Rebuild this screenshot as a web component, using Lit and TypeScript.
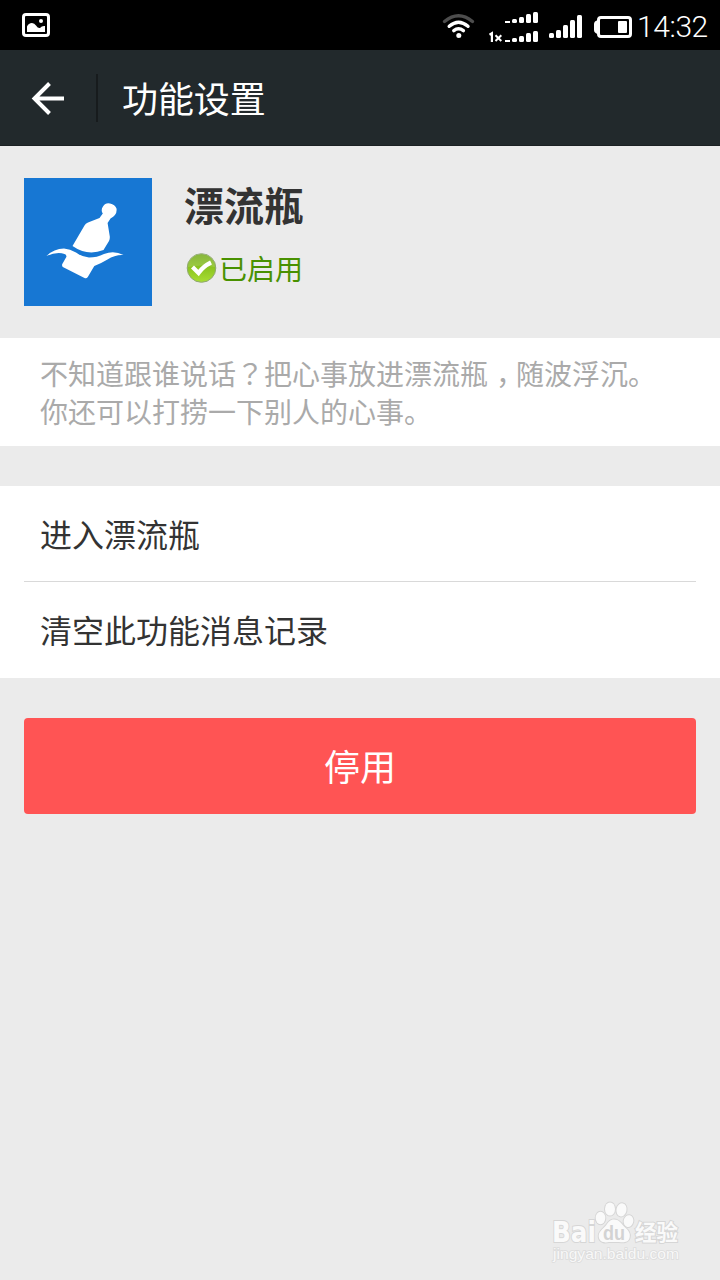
import { LitElement, html, css, svg } from "lit";
import { customElement, property } from "lit/decorators.js";

@customElement("status-bar")
class StatusBar extends LitElement {
  static styles = css`
    :host { display: flex; height: 50px; background: #000; justify-content: space-between; color: #fff; }
    svg { display: block; }
    .right { display: flex; }
    .time { font: 300 30px/50px Roboto, sans-serif; width: 83px; padding-top: 2px; height: 48px; white-space: nowrap; letter-spacing: -0.4px; }
  `;
  bars(x: number, base: number, heights: number[], step: number, w: number) {
    return heights.map((h, i) => svg`<rect x=${x + i * step} y=${base - h} width=${w} height=${h} rx=${h > 3 ? 1.5 : 0.5}></rect>`);
  }
  render() {
    return html`
      <svg width="60" height="50" fill="#fff">
        <rect x="23.5" y="14.5" width="25" height="21" rx="2.5" fill="none" stroke="#fff" stroke-width="3"></rect>
        <circle cx="41" cy="21" r="2"></circle>
        <path d="M27 32V26.5Q28.5 23 32 23Q34.5 23 36 25.5Q38 28.5 40 28Q42 25.5 45 26V32Z"></path>
      </svg>
      <div class="right">
        <svg width="207" height="50" viewBox="430 0 207 50" fill="#fff">
          <g fill="none" stroke="#fff" stroke-width="3.4" stroke-linecap="round">
            <path d="M444.5 21.5Q458.5 9.8 472.5 21.5" stroke="#4d4d4d"></path>
            <path d="M449.2 26.3Q458.5 18.2 468 26.3"></path>
            <path d="M453.8 30.6Q458.5 26.8 463.4 30.6"></path>
          </g>
          <circle cx="458.8" cy="35.6" r="2.5"></circle>
          <path d="M489.5 34.8L491.9 33.3V42" fill="none" stroke="#fff" stroke-width="2.2"></path>
          <path d="M495.5 35.2L501.3 41M501.3 35.2L495.5 41" stroke="#fff" stroke-width="2"></path>
          ${this.bars(512, 23, [4, 6, 9, 11], 7, 5)}
          <rect x="505" y="21" width="5" height="2"></rect>
          ${this.bars(512, 42, [4, 6, 9, 11], 7, 5)}
          <rect x="505" y="40" width="5" height="2"></rect>
          ${this.bars(549, 38, [5, 8, 13, 18, 23], 7, 5)}
          <rect x="598.5" y="17.5" width="32" height="19" rx="2.5" fill="none" stroke="#fff" stroke-width="3"></rect>
          <path d="M598 20Q594 21 594 24V30Q594 33 598 34Z"></path>
          <rect x="618" y="21" width="9" height="12" rx="1"></rect>
        </svg>
        <div class="time">14:32</div>
      </div>`;
  }
}

@customElement("title-bar")
class TitleBar extends LitElement {
  @property() heading = "";
  static styles = css`
    :host { display: flex; align-items: flex-start; box-sizing: border-box; height: 96px; background: #22292c; border-bottom: 1px solid #1b2023; color: #fff; }
    svg { width: 96px; height: 96px; }
    .rule { width: 2px; height: 48px; margin-top: 24px; background: #171b1d; }
    .text { margin-left: 24px; font-size: 36px; line-height: 94px; letter-spacing: -0.1px; }
  `;
  render() {
    return html`
      <svg viewBox="0 0 96 96"><path d="M64 48.5H34M49.5 33.5L34.5 48.5L49.5 63.5" fill="none" stroke="#fff" stroke-width="4"></path></svg>
      <div class="rule"></div>
      <div class="text">${this.heading}</div>`;
  }
}

@customElement("site-watermark")
class SiteWatermark extends LitElement {
  static styles = css`
    :host { position: absolute; left: 540px; top: 1190px; }
    svg { display: block; }
    .mark { fill: #fafafa; stroke: #d6d6d6; stroke-width: 2px; paint-order: stroke; }
    .name { font: bold 29px "DejaVu Sans", sans-serif; }
    .cn { font: bold 22px "Liberation Sans", "Noto Sans CJK SC", sans-serif; }
    .du { font: bold 20px "Liberation Sans", sans-serif; fill: #d3d3d3; }
    .url { font: 15px "Liberation Sans", sans-serif; stroke-width: 1.6px; stroke: #dcdcdc; fill: #f8f8f8; }
  `;
  render() {
    return html`<svg width="160" height="85">
      <g class="mark">
        <text class="name" x="12" y="52" textLength="44" lengthAdjust="spacingAndGlyphs">Bai</text>
        <ellipse cx="60.5" cy="28" rx="4.8" ry="6.2"></ellipse>
        <ellipse cx="70" cy="19" rx="5" ry="6.6"></ellipse>
        <ellipse cx="81.5" cy="20" rx="5" ry="6.6" transform="rotate(12 82 20)"></ellipse>
        <ellipse cx="88.5" cy="31" rx="4.8" ry="6" transform="rotate(12 88 31)"></ellipse>
        <path d="M74 29.5C79 29.5 81 33 84 36.5C88 40 91 43 89.5 48C88 53 83 52.5 79 52H69C65 53 59.5 52.5 58.8 47C58 42 63 39 66 35.5C68.5 32 70 29.5 74 29.5Z"></path>
        <text class="cn" x="95" y="50" textLength="43" lengthAdjust="spacingAndGlyphs">经验</text>
        <text class="url" x="13" y="69" textLength="126" lengthAdjust="spacingAndGlyphs">jingyan.baidu.com</text>
      </g>
      <text class="du" x="63" y="50" textLength="22" lengthAdjust="spacingAndGlyphs">du</text>
    </svg>`;
  }
}

@customElement("app-root")
class AppRoot extends LitElement {
  static styles = css`
    :host { display: block; position: relative; height: 1280px; overflow: hidden; background: #ebebeb; color: #333; font-family: "Noto Sans CJK SC", sans-serif; }
    .profile { display: flex; gap: 32px; height: 128px; padding: 32px 24px; }
    .logo { display: block; width: 128px; height: 128px; }
    .name { font-size: 40px; font-weight: 700; line-height: 53px; }
    .status { display: flex; align-items: center; gap: 1px; height: 48px; padding-top: 13px; font-size: 28px; line-height: 48px; color: #499100; }
    .status svg { width: 34px; height: 34px; }
    .about { box-sizing: border-box; height: 108px; padding: 16px 40px 0; background: #fff; color: #aaa; font-size: 28px; line-height: 38px; white-space: nowrap; }
    .mid { font-family: "Noto Sans CJK TC", sans-serif; }
    .comma { display: inline-block; box-sizing: border-box; width: 28px; padding-left: 8px; font-feature-settings: "halt"; }
    .list { margin-top: 40px; padding: 0 24px; background: #fff; }
    .row { box-sizing: border-box; height: 96px; padding-left: 16px; font-size: 32px; line-height: 94px; }
    .row:first-child { border-bottom: 1px solid #d9d9d9; }
    .button { margin: 40px 24px 0; height: 96px; border-radius: 4px; background: #ff5454; color: #fff; font-size: 36px; line-height: 95px; text-align: center; }
  `;
  render() {
    return html`
      <status-bar></status-bar>
      <title-bar heading="功能设置"></title-bar>
      <div class="profile">
        <svg class="logo" viewBox="24 178 128 128">
          <rect x="24" y="178" width="128" height="128" fill="#1777d3"></rect>
          <path fill="#fff" d="M72.5 246L84.5 225.5Q85.5 223.5 88 222.5L99.5 218L102.8 213.5Q100.5 210 103 206.5Q105.5 202.5 110 203.5Q115 204.5 116.5 208.5Q117.5 215 110.5 218.5L107.6 223L109.8 236.5Q110 239 109 241L103.5 250Q87.5 256.5 72.5 246Z"></path>
          <path fill="#fff" d="M46.5 256Q54 248.5 64 248.5Q70 249 76 252.5Q82 257 89 257.5Q97 257.5 104 254Q114 250 123.5 255Q115 254.5 107.5 259.5Q100 264 94.3 266L87.8 277Q86.5 279 84.5 278L63.3 267.3Q61.5 266 62.3 264L66.3 257Q67 255 64.5 254Q57 251.5 46.5 256Z"></path>
        </svg>
        <div>
          <div class="name">漂流瓶</div>
          <div class="status">
            <svg viewBox="0 0 34 34">
              <defs>
                <linearGradient id="g" x1="0" y1="0" x2="0" y2="1">
                  <stop offset="0" stop-color="#72a91b"></stop>
                  <stop offset="0.5" stop-color="#8cc420"></stop>
                  <stop offset="1" stop-color="#a9de34"></stop>
                </linearGradient>
              </defs>
              <circle cx="17.5" cy="17" r="14.3" fill="url(#g)" stroke="#8fa870" stroke-width="1"></circle>
              <path d="M4 16A13.5 13.5 0 0 1 31 16Q18 13 4 16Z" fill="#fff" opacity="0.15"></path>
              <path d="M8.5 16L14.5 22Q19 15.5 27 11.5" fill="none" stroke="#fff" stroke-width="4.2"></path>
            </svg>
            <span>已启用</span>
          </div>
        </div>
      </div>
      <div class="about">不知道跟谁说话<span class="mid" lang="zh-TW">？</span>把心事放进漂流瓶<span class="comma">，</span>随波浮沉。<br />你还可以打捞一下别人的心事。</div>
      <div class="list">
        <div class="row">进入漂流瓶</div>
        <div class="row">清空此功能消息记录</div>
      </div>
      <div class="button">停用</div>
      <site-watermark></site-watermark>`;
  }
}
